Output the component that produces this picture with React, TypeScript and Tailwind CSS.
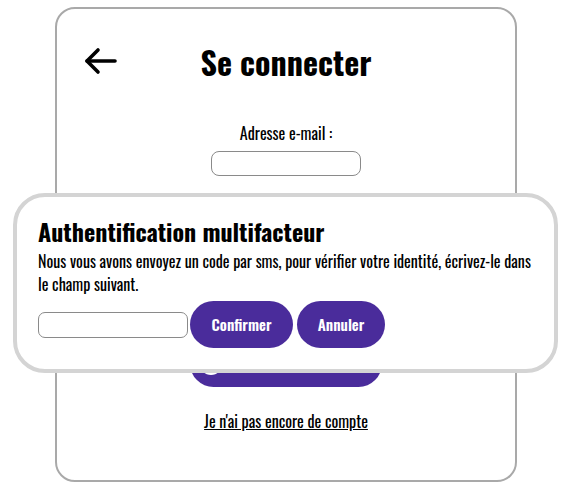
import React, { useState } from 'react';

const font = "font-['Oswald','Liberation_Sans_Narrow','DejaVu_Sans_Condensed',sans-serif]";

const BackArrow: React.FC = () => (
  <svg width="34" height="28" viewBox="0 0 34 28" fill="none" stroke="#000" strokeWidth="3.6" strokeLinecap="round" strokeLinejoin="round">
    <path d="M3 14H31" />
    <path d="M14 3L3 14L14 25" />
  </svg>
);

const MfaModal: React.FC<{ onClose: () => void }> = ({ onClose }) => {
  const [code, setCode] = useState('');
  return (
    <div className="absolute left-[13px] top-[193px] w-[545px] h-[180px] bg-white border-4 border-[#d4d4d4] rounded-[32px] pt-[18px] px-[21px]">
      <h2 className="text-[24px] leading-[32px] font-bold text-black">Authentification multifacteur</h2>
      <p className="mt-[3px] text-[16px] leading-[23px] text-black">
        Nous vous avons envoyez un code par sms, pour vérifier votre identité, écrivez-le dans le champ suivant.
      </p>
      <div className="flex items-center mt-[5px]">
        <input
          value={code}
          onChange={e => setCode(e.target.value)}
          className="w-[150px] h-[26px] border border-[#8a8a8a] rounded-[7px] outline-none px-2"
        />
        <button className="ml-[2px] h-[47px] w-[103px] rounded-full bg-[#4a2c9b] text-white font-semibold text-[15px]">
          Confirmer
        </button>
        <button onClick={onClose} className="ml-[4px] h-[47px] w-[88px] rounded-full bg-[#4a2c9b] text-white font-semibold text-[15px]">
          Annuler
        </button>
      </div>
    </div>
  );
};

const App: React.FC = () => {
  const [email, setEmail] = useState('');
  const [password, setPassword] = useState('');
  const [showMfa, setShowMfa] = useState(true);

  return (
    <div className={`relative w-[572px] h-[495px] bg-white ${font}`}>
      <div className="flex justify-center pt-[7px]">
        <div className="w-[462px] h-[475px] border-2 border-[#a9a9a9] rounded-[20px] flex flex-col items-center">
          <div className="relative w-full flex justify-center mt-[29px]">
            <button className="absolute left-[27px] top-[9px]">
              <BackArrow />
            </button>
            <h1 className="text-[32px] leading-[48px] font-bold text-black">Se connecter</h1>
          </div>

          <label className="mt-[36px] text-[16px] leading-[22px] text-black">Adresse e-mail :</label>
          <input
            value={email}
            onChange={e => setEmail(e.target.value)}
            className="mt-[7px] w-[150px] h-[25px] border border-[#8a8a8a] rounded-[8px] outline-none px-2"
          />

          <label className="mt-[20px] text-[16px] leading-[22px] text-black">Mot de passe :</label>
          <input
            type="password"
            value={password}
            onChange={e => setPassword(e.target.value)}
            className="mt-[7px] w-[150px] h-[25px] border border-[#8a8a8a] rounded-[8px] outline-none px-2"
          />

          <button
            onClick={() => setShowMfa(true)}
            className="mt-[90px] w-[192px] h-[47px] rounded-full bg-[#4a2c9b] text-white font-semibold text-[16px] flex items-center gap-3 pl-[10px]"
          >
            <span className="w-[22px] h-[22px] rounded-full bg-white" />
            Se connecter
          </button>

          <a href="#" className="mt-[22px] text-[16px] leading-[24px] text-black underline">
            Je n'ai pas encore de compte
          </a>
        </div>
      </div>

      {showMfa && <MfaModal onClose={() => setShowMfa(false)} />}
    </div>
  );
};

export default App;
